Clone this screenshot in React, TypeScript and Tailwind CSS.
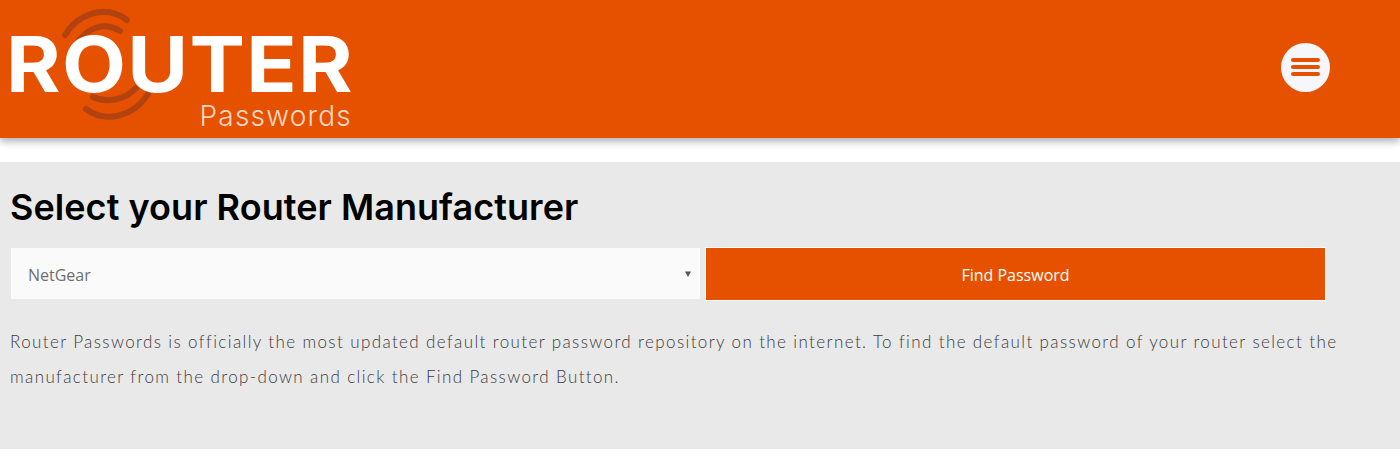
// App.tsx
const Logo = () => (
  <div className="relative w-[352px] h-[138px] ml-[10px] flex flex-col">
    {/* radio waves around the O */}
    <svg className="absolute left-0 top-0" width="160" height="138" viewBox="0 0 160 138" fill="none" stroke="#b2420f" strokeWidth="6" strokeLinecap="round">
      <path d="M55 35C67 15 94 3 117 20" />
      <path d="M67 43C76 30 92 20 110 31" />
      <path d="M83 97C98 104 116 99 126 88" />
      <path d="M76 109C96 124 124 116 138 94" />
    </svg>
    <div className="relative mt-[34px] ml-[-4px] origin-left scale-x-[1.08] font-['Inter',sans-serif] font-bold text-[77px] leading-[60px] tracking-[1.2px] text-white">ROUTER</div>
    <div className="self-end mt-[4px] mr-[10px] font-['Inter',sans-serif] font-light text-[28px] leading-[36px] tracking-[1.2px] text-[#fbd9c6]">Passwords</div>
  </div>
);

export default function App() {
  return (
    <div className="min-h-[461px] bg-white">
      <header className="h-[138px] bg-[#e65100] flex items-center justify-between pr-[70px] shadow-[0_3px_8px_rgba(0,0,0,0.35)]">
        <Logo />
        <button className="w-[49px] h-[49px] rounded-full bg-[#f6f6fb] flex flex-col items-center justify-center gap-[3px] mt-[-4px]">
          <span className="block w-[29px] h-[4px] rounded-full bg-[#e65100]" />
          <span className="block w-[29px] h-[4px] rounded-full bg-[#e65100]" />
          <span className="block w-[29px] h-[4px] rounded-full bg-[#e65100]" />
        </button>
      </header>
      <main className="mt-[24px] h-[287px] bg-[#e9e9e9] px-[10px] pt-[23px]">
        <h1 className="font-['Inter',sans-serif] font-semibold text-[36px] leading-[44px] tracking-[0.05px] text-black">Select your Router Manufacturer</h1>
        <div className="flex items-start mt-[18px] gap-[5px] w-[1316px]">
          <div className="ml-[1px] mt-[1px] w-[689px] h-[51px] bg-[#fafafa] flex items-center justify-between pl-[17px] pr-[9px]">
            <span className="font-['Open_Sans',sans-serif] text-[16px] text-[#6f6f6f] relative top-[1px]">NetGear</span>
            <svg width="6" height="6" viewBox="0 0 6 6" fill="#555"><path d="M0 0.5H6L3 6Z" /></svg>
          </div>
          <button className="flex-1 h-[54px] pt-[2px] bg-[#e65100] border border-white font-['Open_Sans',sans-serif] text-[16px] text-white">Find Password</button>
        </div>
        <p className="mt-[23px] w-[1340px] font-['Lato',sans-serif] font-light text-[17px] leading-[35px] tracking-[1.38px] text-[#3c3c3c]">
          Router Passwords is officially the most updated default router password repository on the internet. To find the default password of your router select the manufacturer from the drop-down and click the Find Password Button.
        </p>
      </main>
    </div>
  );
}
